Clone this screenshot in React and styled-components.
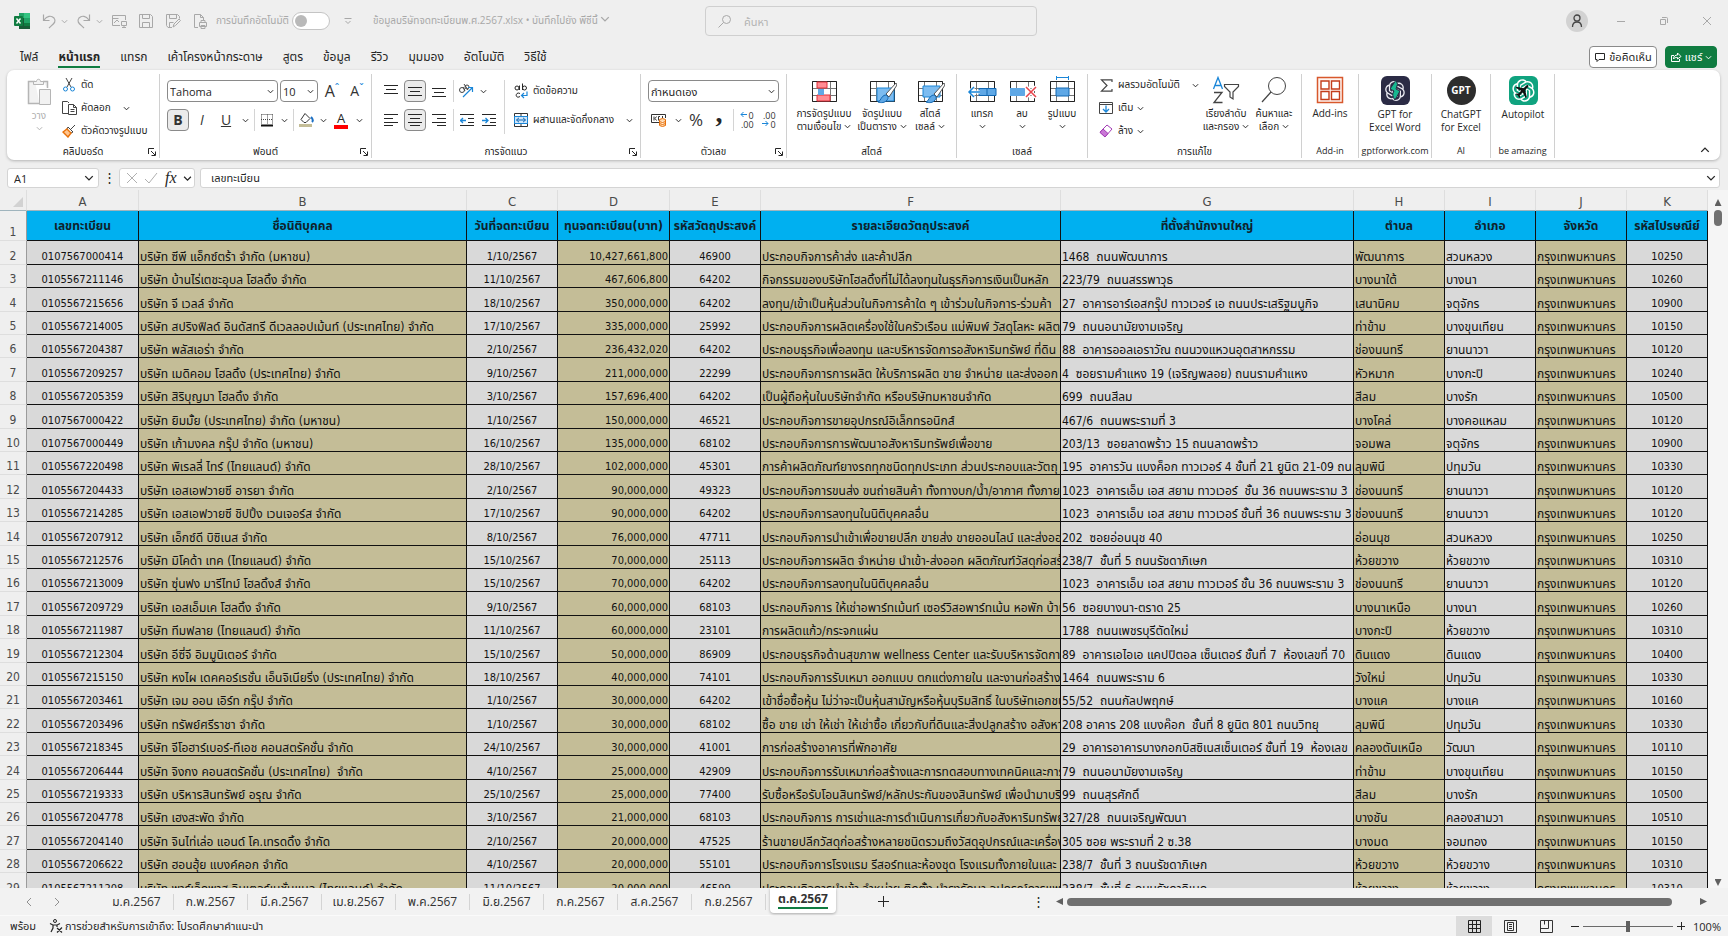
import { useCallback, useState } from 'react';
import styled, { createGlobalStyle, css } from 'styled-components';
import { RiOpenaiFill } from 'react-icons/ri';
import { MdFlight } from 'react-icons/md';

const COLUMNS = [
  { id: 'A', width: 112, title: 'เลขทะเบียน', align: 'center' },
  { id: 'B', width: 328, title: 'ชื่อนิติบุคคล', align: 'left', tan: true },
  { id: 'C', width: 91, title: 'วันที่จดทะเบียน', align: 'center' },
  { id: 'D', width: 112, title: 'ทุนจดทะเบียน(บาท)', align: 'right', tan: true },
  { id: 'E', width: 91, title: 'รหัสวัตถุประสงค์', align: 'center' },
  { id: 'F', width: 300, title: 'รายละเอียดวัตถุประสงค์', align: 'left', tan: true },
  { id: 'G', width: 293, title: 'ที่ตั้งสำนักงานใหญ่', align: 'left' },
  { id: 'H', width: 91, title: 'ตำบล', align: 'left', tan: true },
  { id: 'I', width: 91, title: 'อำเภอ', align: 'left' },
  { id: 'J', width: 91, title: 'จังหวัด', align: 'left', tan: true },
  { id: 'K', width: 81, title: 'รหัสไปรษณีย์', align: 'center' },
];

const BKK = 'กรุงเทพมหานคร';

const ROWS = [
  ['0107567000414', 'บริษัท ซีพี แอ็กซ์ตร้า จำกัด (มหาชน)', '1/10/2567', '10,427,661,800', '46900', 'ประกอบกิจการค้าส่ง และค้าปลีก', '1468  ถนนพัฒนาการ', 'พัฒนาการ', 'สวนหลวง', BKK, '10250'],
  ['0105567211146', 'บริษัท บ้านไร่เตชะอุบล โฮลดิ้ง จำกัด', '11/10/2567', '467,606,800', '64202', 'กิจกรรมของบริษัทโฮลดิ้งที่ไม่ได้ลงทุนในธุรกิจการเงินเป็นหลัก', '223/79  ถนนสรรพาวุธ', 'บางนาใต้', 'บางนา', BKK, '10260'],
  ['0105567215656', 'บริษัท จี เวลล์ จำกัด', '18/10/2567', '350,000,000', '64202', 'ลงทุน/เข้าเป็นหุ้นส่วนในกิจการค้าใด ๆ เข้าร่วมในกิจการ-ร่วมค้า', '27  อาคารอาร์เอสกรุ๊ป ทาวเวอร์ เอ ถนนประเสริฐมนูกิจ', 'เสนานิคม', 'จตุจักร', BKK, '10900'],
  ['0105567214005', 'บริษัท สปริงฟิลด์ อินดัสทรี ดีเวลลอปเม้นท์ (ประเทศไทย) จำกัด', '17/10/2567', '335,000,000', '25992', 'ประกอบกิจการผลิตเครื่องใช้ในครัวเรือน แม่พิมพ์ วัสดุโลหะ ผลิต', '79  ถนนอนามัยงามเจริญ', 'ท่าข้าม', 'บางขุนเทียน', BKK, '10150'],
  ['0105567204387', 'บริษัท พลัสเอร่า จำกัด', '2/10/2567', '236,432,020', '64202', 'ประกอบธุรกิจเพื่อลงทุน และบริหารจัดการอสังหาริมทรัพย์ ที่ดิน', '88  อาคารออลเอราวัณ ถนนวงแหวนอุตสาหกรรม', 'ช่องนนทรี', 'ยานนาวา', BKK, '10120'],
  ['0105567209257', 'บริษัท เมดิคอม โฮลดิ้ง (ประเทศไทย) จำกัด', '9/10/2567', '211,000,000', '22299', 'ประกอบกิจการการผลิต ให้บริการผลิต ขาย จำหน่าย และส่งออก', '4  ซอยรามคำแหง 19 (เจริญพลอย) ถนนรามคำแหง', 'หัวหมาก', 'บางกะปิ', BKK, '10240'],
  ['0105567205359', 'บริษัท สิริบุญมา โฮลดิ้ง จำกัด', '3/10/2567', '157,696,400', '64202', 'เป็นผู้ถือหุ้นในบริษัทจำกัด หรือบริษัทมหาชนจำกัด', '699  ถนนสีลม', 'สีลม', 'บางรัก', BKK, '10500'],
  ['0107567000422', 'บริษัท ยิมมั้ย (ประเทศไทย) จำกัด (มหาชน)', '1/10/2567', '150,000,000', '46521', 'ประกอบกิจการขายอุปกรณ์อิเล็กทรอนิกส์', '467/6  ถนนพระรามที่ 3', 'บางโคล่', 'บางคอแหลม', BKK, '10120'],
  ['0107567000449', 'บริษัท เก้ามงคล กรุ๊ป จำกัด (มหาชน)', '16/10/2567', '135,000,000', '68102', 'ประกอบกิจการการพัฒนาอสังหาริมทรัพย์เพื่อขาย', '203/13  ซอยลาดพร้าว 15 ถนนลาดพร้าว', 'จอมพล', 'จตุจักร', BKK, '10900'],
  ['0105567220498', 'บริษัท พิเรลลี่ ไทร์ (ไทยแลนด์) จำกัด', '28/10/2567', '102,000,000', '45301', 'การค้าผลิตภัณฑ์ยางรถทุกชนิดทุกประเภท ส่วนประกอบและวัตถุ', '195  อาคารวัน แบงค็อก ทาวเวอร์ 4 ชั้นที่ 21 ยูนิต 21-09 ถนน', 'ลุมพินี', 'ปทุมวัน', BKK, '10330'],
  ['0105567204433', 'บริษัท เอสเอฟวายซี อารยา จำกัด', '2/10/2567', '90,000,000', '49323', 'ประกอบกิจการขนส่ง ขนถ่ายสินค้า ทั้งทางบก/น้ำ/อากาศ ทั้งภาย', '1023  อาคารเอ็ม เอส สยาม ทาวเวอร์  ชั้น 36 ถนนพระราม 3', 'ช่องนนทรี', 'ยานนาวา', BKK, '10120'],
  ['0105567214285', 'บริษัท เอสเอฟวายซี ชิปปิ้ง เวนเจอร์ส จำกัด', '17/10/2567', '90,000,000', '64202', 'ประกอบกิจการลงทุนในนิติบุคคลอื่น', '1023  อาคารเอ็ม เอส สยาม ทาวเวอร์ ชั้นที่ 36 ถนนพระราม 3', 'ช่องนนทรี', 'ยานนาวา', BKK, '10120'],
  ['0105567207912', 'บริษัท เอ็กซ์ดี บิซิเนส จำกัด', '8/10/2567', '76,000,000', '47711', 'ประกอบกิจการนำเข้าเพื่อขายปลีก ขายส่ง ขายออนไลน์ และส่งออก', '202  ซอยอ่อนนุช 40', 'อ่อนนุช', 'สวนหลวง', BKK, '10250'],
  ['0105567212576', 'บริษัท มิโคด้า เทค (ไทยแลนด์) จำกัด', '15/10/2567', '70,000,000', '25113', 'ประกอบกิจการผลิต จำหน่าย นำเข้า-ส่งออก ผลิตภัณฑ์วัสดุก่อสร้าง', '238/7  ชั้นที่ 5 ถนนรัชดาภิเษก', 'ห้วยขวาง', 'ห้วยขวาง', BKK, '10310'],
  ['0105567213009', 'บริษัท ซุ่นฟง มารีไทม์ โฮลดิ้งส์ จำกัด', '15/10/2567', '70,000,000', '64202', 'ประกอบกิจการลงทุนในนิติบุคคลอื่น', '1023  อาคารเอ็ม เอส สยาม ทาวเวอร์ ชั้น 36 ถนนพระราม 3', 'ช่องนนทรี', 'ยานนาวา', BKK, '10120'],
  ['0105567209729', 'บริษัท เอสเอ็มเค โฮลดิ้ง จำกัด', '9/10/2567', '60,000,000', '68103', 'ประกอบกิจการ ให้เช่าอพาร์ทเม้นท์ เซอร์วิสอพาร์ทเม้น หอพัก บ้าน', '56  ซอยบางนา-ตราด 25', 'บางนาเหนือ', 'บางนา', BKK, '10260'],
  ['0105567211987', 'บริษัท ทีมฟลาย (ไทยแลนด์) จำกัด', '11/10/2567', '60,000,000', '23101', 'การผลิตแก้ว/กระจกแผ่น', '1788  ถนนเพชรบุรีตัดใหม่', 'บางกะปิ', 'ห้วยขวาง', BKK, '10310'],
  ['0105567212304', 'บริษัท อีซี่จี อิมมูนิเตอร์ จำกัด', '15/10/2567', '50,000,000', '86909', 'ประกอบธุรกิจด้านสุขภาพ wellness Center และรับบริหารจัดการ', '89  อาคารเอไอเอ แคปปิตอล เซ็นเตอร์ ชั้นที่ 7  ห้องเลขที่ 70', 'ดินแดง', 'ดินแดง', BKK, '10400'],
  ['0105567215150', 'บริษัท หงไผ เดคคอร์เรชั่น เอ็นจิเนียริ่ง (ประเทศไทย) จำกัด', '18/10/2567', '40,000,000', '74101', 'ประกอบกิจการรับเหมา ออกแบบ ตกแต่งภายใน และงานก่อสร้าง', '1464  ถนนพระราม 6', 'วังใหม่', 'ปทุมวัน', BKK, '10330'],
  ['0105567203461', 'บริษัท เจม ออน เอิร์ท กรุ๊ป จำกัด', '1/10/2567', '30,000,000', '64202', 'เข้าชื่อซื้อหุ้น ไม่ว่าจะเป็นหุ้นสามัญหรือหุ้นบุริมสิทธิ์ ในบริษัทเอกชน', '55/52  ถนนกัลปพฤกษ์', 'บางแค', 'บางแค', BKK, '10160'],
  ['0105567203496', 'บริษัท ทรัพย์ศรีราชา จำกัด', '1/10/2567', '30,000,000', '68102', 'ซื้อ ขาย เช่า ให้เช่า ให้เช่าซื้อ เกี่ยวกับที่ดินและสิ่งปลูกสร้าง อสังหา', '208 อาคาร 208 แบงค๊อก  ชั้นที่ 8 ยูนิต 801 ถนนวิทยุ', 'ลุมพินี', 'ปทุมวัน', BKK, '10330'],
  ['0105567218345', 'บริษัท จีโอฮาร์เบอร์-ทีเอช คอนสตรัคชั่น จำกัด', '24/10/2567', '30,000,000', '41001', 'การก่อสร้างอาคารที่พักอาศัย', '29  อาคารอาคารบางกอกบิสซิเนสเซ็นเตอร์ ชั้นที่ 19  ห้องเลข', 'คลองตันเหนือ', 'วัฒนา', BKK, '10110'],
  ['0105567206444', 'บริษัท จิงกง คอนสตรัคชั่น (ประเทศไทย)  จำกัด', '4/10/2567', '25,000,000', '42909', 'ประกอบกิจการรับเหมาก่อสร้างและการทดสอบทางเทคนิคและการ', '79  ถนนอนามัยงามเจริญ', 'ท่าข้าม', 'บางขุนเทียน', BKK, '10150'],
  ['0105567219333', 'บริษัท บริหารสินทรัพย์ อรุณ จำกัด', '25/10/2567', '25,000,000', '77400', 'รับซื้อหรือรับโอนสินทรัพย์/หลักประกันของสินทรัพย์ เพื่อนำมาบริหาร', '99  ถนนสุรศักดิ์', 'สีลม', 'บางรัก', BKK, '10500'],
  ['0105567204778', 'บริษัท เฮงสะพัด จำกัด', '3/10/2567', '21,000,000', '68103', 'ประกอบกิจการ การเช่าและการดำเนินการเกี่ยวกับอสังหาริมทรัพย์', '327/28  ถนนเจริญพัฒนา', 'บางชัน', 'คลองสามวา', BKK, '10510'],
  ['0105567204140', 'บริษัท จินไท่เล่อ แอนด์ โค.เทรดดิ้ง จำกัด', '2/10/2567', '20,000,000', '47525', 'ร้านขายปลีกวัสดุก่อสร้างหลายชนิดรวมถึงวัสดุอุปกรณ์และเครื่องมือ', '305 ซอย พระรามที่ 2 ซ.38', 'บางมด', 'จอมทอง', BKK, '10150'],
  ['0105567206622', 'บริษัท ฮอนฮุ้ย แบงค์คอก จำกัด', '4/10/2567', '20,000,000', '55101', 'ประกอบกิจการโรงแรม รีสอร์ทและห้องชุด โรงแรมทั้งภายในและ', '238/7  ชั้นที่ 3 ถนนรัชดาภิเษก', 'ห้วยขวาง', 'ห้วยขวาง', BKK, '10310'],
  ['0105567211208', 'บริษัท พาร์เอ็กพาส อินเตอร์เนชั่นแนล (ไทยแลนด์) จำกัด', '11/10/2567', '20,000,000', '46599', 'ประกอบกิจการนำเข้า จำหน่าย ติดตั้ง บำรุงรักษา อุปกรณ์การแพทย์', '238/7  ชั้นที่ 6 ถนนรัชดาภิเษก', 'ห้วยขวาง', 'ห้วยขวาง', BKK, '10310'],
];

const MENU = ['ไฟล์', 'หน้าแรก', 'แทรก', 'เค้าโครงหน้ากระดาษ', 'สูตร', 'ข้อมูล', 'รีวิว', 'มุมมอง', 'อัตโนมัติ', 'วิธีใช้'];

const SHEETS = ['ม.ค.2567', 'ก.พ.2567', 'มี.ค.2567', 'เม.ย.2567', 'พ.ค.2567', 'มิ.ย.2567', 'ก.ค.2567', 'ส.ค.2567', 'ก.ย.2567', 'ต.ค.2567'];

const Svg = ({ w = 16, h = w, box = `0 0 ${w} ${h}`, className, children }) => (
  <svg className={className} width={w} height={h} viewBox={box} fill="none" stroke="currentColor" strokeWidth="1" aria-hidden="true">
    {children}
  </svg>
);

const Chevron = ({ size = 7 }) => (
  <Svg w={size} box="0 0 8 8">
    <path d="M1 2.5l3 3 3-3" strokeWidth="1.1" />
  </Svg>
);

const LinesIcon = ({ lines }) => (
  <Svg w={14}>
    {lines.map(([x, y, len]) => (
      <path key={y} d={`M${x} ${y}.5h${len}`} />
    ))}
  </Svg>
);

const TableIcon = ({ children }) => (
  <Svg w={30} h={28}>
    <path d="M3.5 5.5h24v20h-24zM3.5 12.5h24M3.5 19.5h24M9.5 5.5v20M21.5 5.5v20" stroke="#777" />
    <path d="M3.5 5.5h24v20h-24z" stroke="#222" />
    {children}
  </Svg>
);

const Brush = () => (
  <>
    <path d="M29 7L19 18l3 3L30 9z" fill="#fff" stroke="#555" />
    <path d="M11 26c3-1 3-6 7-7 3 0 4 3 2 5-2 3-6 3-9 2z" fill="#5fa8e6" stroke="#1268b3" />
  </>
);

const icons = {
  excel: (
    <Svg w={16}>
      <path d="M5 0h11v16H5z" fill="#21a366" stroke="none" />
      <path d="M10 0h6v5h-6z" fill="#33c481" stroke="none" />
      <path d="M5 5h5v6H5zM5 11h11v5H5z" fill="#185c37" stroke="none" />
      <path d="M10 10h6v3h-6z" fill="#107c41" stroke="none" />
      <rect y="3" width="9" height="10" rx="1" fill="#107c41" stroke="none" />
      <path d="M2.5 5.5l4 5M6.5 5.5l-4 5" stroke="#fff" strokeWidth="1.4" />
    </Svg>
  ),
  undo: <Svg><path d="M2.5 1.5v6h6M3 7c3-4 7-5 10-2 3 4-1 6-5 10" strokeWidth="1.2" /></Svg>,
  redo: <Svg><path d="M13.5 1.5v6h-6M13 7C10 3 6 2 3 5c-3 4 1 6 5 10" strokeWidth="1.2" /></Svg>,
  present: <Svg><path d="M9 12.5H1.5v-10h13V7M1.5 5.5h6M3 10l3-3 2 2M10.5 8.5h5v4h-5zM13 12.5v2M11 14.5h4" /></Svg>,
  save: <Svg><path d="M1.5 1.5h11l2 2v11h-13zM4.5 1.5v4h7v-4M4.5 14.5v-5h7v5" /></Svg>,
  saveEdit: <Svg><path d="M7 14.5H3l-1.5-2v-11h11l2 2v2M4.5 1.5v4h7v-4M4.5 14V9.5h4M8 14l1-3 5-5 1.5 1.5-5 5z" /></Svg>,
  print: <Svg><path d="M6 14.5H2.5v-13h6l3 3V7M8.5 1.5v3h3M7.5 9.5h7v4h-7zM9 9V7.5h4V9M9 12.5h4v3H9z" /></Svg>,
  search: <Svg w={14}><circle cx="8.5" cy="5.5" r="4" /><path d="M5.5 8.5l-5 5" /></Svg>,
  more: <Svg w={10}><path d="M1.5 2.5h7M2.5 5L5 7.5 7.5 5" /></Svg>,
  person: <Svg><circle cx="8" cy="5" r="3" strokeWidth="1.3" /><path d="M3.5 14c0-3 1.5-5 4.5-5s4.5 2 4.5 5" strokeWidth="1.3" /></Svg>,
  minimize: <Svg w={10}><path d="M1 5.5h8" /></Svg>,
  restore: <Svg w={10}><path d="M1.5 3.5h5v5h-5zM3 1.5h4.5q1 0 1 1V7" /></Svg>,
  close: <Svg w={10}><path d="M1 1l8 8M9 1L1 9" /></Svg>,
  comment: <Svg w={12}><path d="M1.5 2.5h9v6H5l-2 2v-2H1.5z" /></Svg>,
  share: <Svg w={12}><path d="M4 4.5H1.5v6h8V8M3.5 8c0-3 2-4 4-4V2L11 5.5 7.5 8V6.5c-2 0-3 0-4 1.5z" /></Svg>,
  paste: (
    <Svg w={26} h={28}>
      <path d="M9 3.5H2.5v22h11M17 3.5h4.5V10" stroke="#b5b5b5" fill="#f2f2f2" strokeWidth="1.5" />
      <path d="M7.5 6.5v-3h3c0-3 4-3 4 0h3v3z" stroke="#b5b5b5" fill="#f2f2f2" />
      <path d="M13.5 11.5h11v15h-11z" stroke="#b5b5b5" fill="#f2f2f2" />
    </Svg>
  ),
  cut: (
    <Svg w={14}>
      <path d="M4 0l5 9M10 0L5 9" stroke="#444" />
      <circle cx="3.5" cy="11" r="2" stroke="#1a86d8" /><circle cx="10.5" cy="11" r="2" stroke="#1a86d8" />
    </Svg>
  ),
  copy: <Svg w={15} h={14}><path d="M6 12.5H.5V.5h5L7 2M6.5 3.5h5l3 3v7h-8zM11.5 3.5v3h3M8.5 8.5h4M8.5 10.5h4" stroke="#444" /></Svg>,
  painter: <Svg w={14}><path d="M13 1L9 5M6 3l5 5-2 1-4-4z" stroke="#444" /><path d="M5 5l4 4-3 4-5-5z" fill="#ffc58f" stroke="#e8710a" strokeWidth="1.4" /></Svg>,
  border: (
    <Svg w={14}>
      <path d="M1.5 1.5h12M1.5 1.5v10M7.5 1.5v10M12.5 1.5v10M1 6.5h12" stroke="#444" strokeDasharray="1 1" />
      <path d="M1 12.5h12" stroke="#111" strokeWidth="2" />
    </Svg>
  ),
  fill: (
    <Svg w={16}>
      <path d="M7 1.5l5 5-4 4H6l-3-3z" stroke="#333" /><path d="M13 5c2 2 2 4 1 5" stroke="#1a6fc4" strokeWidth="2" />
      <path d="M1 12h13v3H1z" fill="#c4bd97" stroke="none" />
    </Svg>
  ),
  bars: {
    top: <LinesIcon lines={[[0, 1, 14], [2, 5, 10], [0, 9, 14]]} />,
    middle: <LinesIcon lines={[[0, 3, 14], [2, 7, 10], [0, 11, 14]]} />,
    bottom: <LinesIcon lines={[[0, 4, 14], [2, 8, 10], [0, 12, 14]]} />,
    left: <LinesIcon lines={[[0, 1, 14], [0, 5, 9], [0, 9, 14], [0, 12, 9]]} />,
    center: <LinesIcon lines={[[0, 1, 14], [2, 5, 10], [0, 9, 14], [2, 12, 10]]} />,
    right: <LinesIcon lines={[[0, 1, 14], [5, 5, 9], [0, 9, 14], [5, 12, 9]]} />,
  },
  orientation: (
    <Svg w={16}>
      <circle cx="4" cy="7" r="2.5" stroke="#444" /><path d="M5 4l2 4M6 1l4 6" stroke="#444" /><circle cx="9" cy="4" r="2" stroke="#444" />
      <path d="M5 14l9-9M10 4.5h4.5V9" stroke="#1a86d8" strokeWidth="1.2" />
    </Svg>
  ),
  outdent: <Svg w={14}><path d="M0 1.5h14M8 5.5h6M8 9.5h6M0 12.5h14" /><path d="M0 7.5h6M3 5L.5 7.5 3 10" stroke="#1a86d8" strokeWidth="1.3" /></Svg>,
  indent: <Svg w={14}><path d="M0 1.5h14M8 5.5h6M8 9.5h6M0 12.5h14" /><path d="M0 7.5h6M3.5 5L6 7.5 3.5 10" stroke="#1a86d8" strokeWidth="1.3" /></Svg>,
  wrap: (
    <Svg w={14} h={16}>
      <circle cx="3" cy="5" r="2" /><path d="M5.5 2.5V7M8.5.5V7M6 13.5c-3 2-5-1-3-3q1-1 3 0" /><circle cx="10.5" cy="5" r="2" />
      <path d="M13 8.5v4H8M10 10l-2.5 2.5L10 15" stroke="#1a86d8" strokeWidth="1.2" />
    </Svg>
  ),
  merge: (
    <Svg w={14}>
      <path d="M.5.5h13v13H.5zM7 .5v3M7 11v2.5" stroke="#333" />
      <path d="M.5 3.5h13v7H.5z" fill="#cfe6fa" stroke="#1a86d8" /><path d="M2.5 7h9M5 4.8L2.5 7 5 9.2M9 4.8L11.5 7 9 9.2" stroke="#1268b3" />
    </Svg>
  ),
  currency: (
    <Svg w={16} h={14}>
      <path d="M8 9.5H.5v-8h14V5M3 3.5v4M5.5 3.5q-3 2 0 4M9 3.5H7.5v4M11.5 3v2" stroke="#333" />
      <path d="M8.5 6.5q3-2 6 0v6q-3 2-6 0zM8.5 8.5q3 2 6 0M8.5 10.5q3 2 6 0" fill="#ffd9b0" stroke="#e8710a" />
    </Svg>
  ),
  conditional: (
    <TableIcon>
      <path d="M8 6h10v6H8zM8 19h13v6H8z" fill="#ff8d94" stroke="#e0313b" />
      <path d="M9 13h6v6H9z" fill="#5fa8e6" stroke="none" />
    </TableIcon>
  ),
  formatTable: <TableIcon><path d="M10 12h17v13H10z" fill="#7dbcf0" stroke="#1a86d8" /><Brush /></TableIcon>,
  cellStyle: <TableIcon><path d="M8 10h17v11H8z" fill="#7dbcf0" stroke="#1a86d8" /><Brush /></TableIcon>,
  insert: (
    <TableIcon>
      <path d="M12 12.5h17v7H12zM20 12.5v7" fill="#5fa8e6" stroke="#1268b3" />
      <path d="M13 16H2M7 11l-5 5 5 5" stroke="#fff" strokeWidth="3" /><path d="M13 16H2M7 11l-5 5 5 5" stroke="#1a86d8" strokeWidth="1.5" />
    </TableIcon>
  ),
  remove: (
    <TableIcon>
      <path d="M3 12h15v8H3z" fill="#5fa8e6" stroke="none" />
      <path d="M19 11l10 10M29 11L19 21" stroke="#fff" strokeWidth="4" /><path d="M19 11l10 10M29 11L19 21" stroke="#e8434c" strokeWidth="1.5" />
    </TableIcon>
  ),
  format: <TableIcon><path d="M9 12h13v8H9z" fill="#5fa8e6" stroke="#1268b3" /><path d="M9 1.5h13M9.5 0v4M21.5 0v4" stroke="#1a86d8" /></TableIcon>,
  sum: <Svg w={13}><path d="M12 3V.8H1.5L7 6.5l-5.5 5.7H12V10" stroke="#444" strokeWidth="1.2" /></Svg>,
  fillDown: <Svg w={14}><path d="M.5 1.5h13v11H.5zM.5 3.5h13" stroke="#444" /><path d="M7 4.5V11M4 8l3 3 3-3" stroke="#1a86d8" strokeWidth="1.3" /></Svg>,
  clear: <Svg w={14}><path d="M8 1l5 4-7 8-5-5z" stroke="#a33bb5" /><path d="M4 5l5 4.5L6 13l-5-4.5z" fill="#c978d6" stroke="#a33bb5" /></Svg>,
  sort: (
    <Svg w={28} h={28}>
      <path d="M1.5 13L6 1.5 10.5 13M3 9.5h6" stroke="#1a86d8" strokeWidth="1.3" />
      <path d="M2 16.5h8L2 26.5h8.5" stroke="#444" strokeWidth="1.3" />
      <path d="M12.5 8.5h14v2L21 16v7l-3-2v-5l-5.5-5.5z" stroke="#444" strokeWidth="1.2" />
    </Svg>
  ),
  find: <Svg w={28}><circle cx="17" cy="10" r="8.5" stroke="#444" /><path d="M11 16L2 26" stroke="#444" strokeWidth="1.2" /></Svg>,
  addins: (
    <Svg w={28} h={28}>
      <path d="M1.5 1.5h25v25h-25z" stroke="#d8582c" fill="#fff5f0" strokeWidth="1.5" />
      <path d="M5 5h8v8H5zM15.5 5h8v8h-8zM5 15.5h8v8H5zM15.5 15.5h8v8h-8z" stroke="#c43e1c" fill="#fff" strokeWidth="1.4" />
    </Svg>
  ),
  arrowLeft: <Svg w={7}><path d="M7 3.5H1M3.5 1L1 3.5 3.5 6" stroke="#1a86d8" /></Svg>,
  arrowRight: <Svg w={7}><path d="M0 3.5h6M3.5 1L6 3.5 3.5 6" stroke="#1a86d8" /></Svg>,
  launcher: <Svg w={8}><path d="M.5 6V.5H6M3 3l4 4M7.5 3.5v4h-4" /></Svg>,
  up: <Svg w={10} box="0 0 8 8"><path d="M1 5.5l3-3 3 3" strokeWidth="1.1" /></Svg>,
  access: <Svg w={14}><circle cx="6" cy="2" r="1.5" /><path d="M1 4.5l3 1.5v3l-2 4M11 4.5L8 6v2M4 6h4M8 9l5 4.5M13 8.5l-5 5" strokeWidth="1.2" /></Svg>,
  grid: <Svg w={13}><path d="M.5.5h12v12H.5zM4.5.5v12M8.5.5v12M.5 4.5h12M.5 8.5h12" stroke="#222" /></Svg>,
  pageLayout: <Svg w={13}><path d="M.5.5h12v12H.5zM3.5 2.5h6v8h-6zM5 4.5h3M5 6.5h3M5 8.5h3" stroke="#333" /></Svg>,
  pageBreak: <Svg w={13}><path d="M.5.5h12v12H.5zM.5 8.5h8v-8M4.5.5v4" stroke="#333" /></Svg>,
};

function Tool({ label, active, width, children }) {
  return (
    <ToolButton type="button" aria-label={label} title={label} $active={active} $width={width}>
      {children}
    </ToolButton>
  );
}

const More = ({ label = 'ตัวเลือกเพิ่มเติม' }) => (
  <Tool label={label} width={12}>
    <Chevron />
  </Tool>
);

function Combo({ label, value, width }) {
  return (
    <ComboBox $width={width}>
      <select aria-label={label} defaultValue={value}>
        <option>{value}</option>
      </select>
      <Chevron />
    </ComboBox>
  );
}

function Small({ icon, label, menu, spread }) {
  return (
    <SmallButton type="button" $spread={spread}>
      <IconSlot>{icon}</IconSlot>
      <span>{label}</span>
      {menu && <Chevron />}
    </SmallButton>
  );
}

function Large({ icon, lines, menu, width, muted }) {
  return (
    <LargeButton type="button" $width={width} $muted={muted}>
      {icon}
      {lines.map((line, i) => (
        <span key={line}>
          {line}
          {menu && lines.length > 1 && i === lines.length - 1 && <Chevron />}
        </span>
      ))}
      {menu && lines.length === 1 && <Chevron />}
    </LargeButton>
  );
}

function Group({ title, width, inset, launcher, compact, children }) {
  return (
    <GroupBox $width={width} aria-label={title}>
      <GroupBody $inset={inset}>{children}</GroupBody>
      <GroupFooter $compact={compact}>
        <span>{title}</span>
        {launcher && <Launcher type="button" aria-label={`การตั้งค่า${title}`}>{icons.launcher}</Launcher>}
      </GroupFooter>
    </GroupBox>
  );
}

function Ribbon() {
  return (
    <RibbonBox>
      <Group title="คลิปบอร์ด" width={153} inset={10} launcher>
        <Large icon={icons.paste} lines={['วาง']} menu width={44} muted />
        <Stack>
          <Small icon={icons.cut} label="ตัด" />
          <Small icon={icons.copy} label="คัดลอก" menu spread />
          <Small icon={icons.painter} label="ตัวคัดวางรูปแบบ" />
        </Stack>
      </Group>
      <Group title="ฟอนต์" width={212} inset={7} launcher>
        <Rows>
          <ToolRow>
            <Combo label="ฟอนต์" value="Tahoma" width={111} />
            <Combo label="ขนาดฟอนต์" value="10" width={38} />
            <Tool label="เพิ่มขนาดฟอนต์" width={24}><Glyph $size={16}>A</Glyph><Caret>ˆ</Caret></Tool>
            <Tool label="ลดขนาดฟอนต์"><Glyph $size={14}>A</Glyph><Caret>ˇ</Caret></Tool>
          </ToolRow>
          <ToolRow>
            <Tool label="ตัวหนา" active><Glyph $size={14} $bold>B</Glyph></Tool>
            <Tool label="ตัวเอียง"><Glyph $size={14} $italic>I</Glyph></Tool>
            <Tool label="ขีดเส้นใต้"><Glyph $size={14} $underline>U</Glyph></Tool>
            <More />
            <Rule />
            <Tool label="เส้นขอบ" width={18}>{icons.border}</Tool>
            <More />
            <Rule />
            <Tool label="สีเติม" width={18}>{icons.fill}</Tool>
            <More />
            <Tool label="สีฟอนต์" width={20}><ColorA>A</ColorA></Tool>
            <More />
          </ToolRow>
        </Rows>
      </Group>
      <Group title="การจัดแนว" width={269} inset={8} launcher>
        <Rows>
          <ToolRow>
            <Tool label="จัดชิดด้านบน">{icons.bars.top}</Tool>
            <Tool label="จัดกึ่งกลางแนวตั้ง" active>{icons.bars.middle}</Tool>
            <Tool label="จัดชิดด้านล่าง">{icons.bars.bottom}</Tool>
            <Rule />
            <Tool label="การวางแนว" width={18}>{icons.orientation}</Tool>
            <More />
          </ToolRow>
          <ToolRow>
            <Tool label="จัดชิดซ้าย">{icons.bars.left}</Tool>
            <Tool label="จัดกึ่งกลาง" active>{icons.bars.center}</Tool>
            <Tool label="จัดชิดขวา">{icons.bars.right}</Tool>
            <Rule />
            <Tool label="ลดการเยื้อง" width={20}>{icons.outdent}</Tool>
            <Tool label="เพิ่มการเยื้อง" width={20}>{icons.indent}</Tool>
          </ToolRow>
        </Rows>
        <Rule $tall />
        <Rows>
          <Small icon={icons.wrap} label="ตัดข้อความ" />
          <Small icon={icons.merge} label="ผสานและจัดกึ่งกลาง" menu spread />
        </Rows>
      </Group>
      <Group title="ตัวเลข" width={146} inset={7} launcher>
        <Rows>
          <ToolRow>
            <Combo label="รูปแบบตัวเลข" value="กำหนดเอง" width={131} />
          </ToolRow>
          <ToolRow>
            <Tool label="รูปแบบตัวเลขทางบัญชี">{icons.currency}</Tool>
            <More />
            <Tool label="ลักษณะเปอร์เซ็นต์" width={20}><Glyph $size={17}>%</Glyph></Tool>
            <Tool label="ลักษณะจุลภาค"><Comma>,</Comma></Tool>
            <Rule />
            <Tool label="เพิ่มตำแหน่งทศนิยม" width={20}>
              <Decimal><span>{icons.arrowLeft}0</span><span>.00</span></Decimal>
            </Tool>
            <Tool label="ลดตำแหน่งทศนิยม" width={20}>
              <Decimal><span>.00</span><span>{icons.arrowRight}0</span></Decimal>
            </Tool>
          </ToolRow>
        </Rows>
      </Group>
      <Group title="สไตล์" width={170} inset={6}>
        <Large icon={icons.conditional} lines={['การจัดรูปแบบ', 'ตามเงื่อนไข']} menu width={62} />
        <Large icon={icons.formatTable} lines={['จัดรูปแบบ', 'เป็นตาราง']} menu width={54} />
        <Large icon={icons.cellStyle} lines={['สไตล์', 'เซลล์']} menu width={42} />
      </Group>
      <Group title="เซลล์" width={131} inset={5}>
        <Large icon={icons.insert} lines={['แทรก']} menu width={40} />
        <Large icon={icons.remove} lines={['ลบ']} menu width={40} />
        <Large icon={icons.format} lines={['รูปแบบ']} menu width={40} />
      </Group>
      <Group title="การแก้ไข" width={214} inset={10}>
        <Stack $width={103}>
          <Small icon={icons.sum} label="ผลรวมอัตโนมัติ" menu spread />
          <Small icon={icons.fillDown} label="เติม" menu />
          <Small icon={icons.clear} label="ล้าง" menu />
        </Stack>
        <Large icon={icons.sort} lines={['เรียงลำดับ', 'และกรอง']} menu width={50} />
        <Large icon={icons.find} lines={['ค้นหาและ', 'เลือก']} menu width={46} />
      </Group>
      <Group title="Add-in" width={57} inset={3} compact>
        <Large icon={icons.addins} lines={['Add-ins']} width={50} />
      </Group>
      <Group title="gptforwork.com" width={73} inset={2} compact>
        <Large
          icon={(
            <AppBadge $bg="#2b2b45">
              <RiOpenaiFill size={24} color="#e8e8f0" />
              <Leaf w={10} h={20}><path d="M6 0q3 4 0 9l4 2-5 9q-4-5-1-9L0 9z" fill="#17b890" stroke="#2b2b45" /></Leaf>
            </AppBadge>
          )}
          lines={['GPT for', 'Excel Word']}
          width={68}
        />
      </Group>
      <Group title="AI" width={59} inset={2} compact>
        <Large icon={<AppBadge $bg="#2d2d2d" $round>GPT</AppBadge>} lines={['ChatGPT', 'for Excel']} width={54} />
      </Group>
      <Group title="be amazing" width={64} inset={3} compact>
        <Large icon={<AppBadge $bg="#10a37f"><RiOpenaiFill size={27} color="#fff" /><Plane size={18} /></AppBadge>} lines={['Autopilot']} width={58} />
      </Group>
      <Collapse type="button" aria-label="ยุบ Ribbon">{icons.up}</Collapse>
    </RibbonBox>
  );
}

function Sheet() {
  return (
    <SheetArea>
      <TableScroll>
        <Grid>
          <colgroup>
            <col width={27} />
            {COLUMNS.map((c) => (
              <col key={c.id} width={c.width} />
            ))}
          </colgroup>
          <thead>
            <tr>
              <ColumnHead aria-label="เลือกทั้งหมด"><Corner /></ColumnHead>
              {COLUMNS.map((c) => (
                <ColumnHead key={c.id} scope="col">{c.id}</ColumnHead>
              ))}
            </tr>
          </thead>
          <tbody>
            <tr>
              <RowHead scope="row">1</RowHead>
              {COLUMNS.map((c) => (
                <TitleCell key={c.id}>{c.title}</TitleCell>
              ))}
            </tr>
            {ROWS.map((row, i) => (
              <DataRow key={row[0]}>
                <RowHead scope="row">{i + 2}</RowHead>
                {row.map((value, j) => (
                  <Cell key={COLUMNS[j].id} $align={COLUMNS[j].align} $tan={COLUMNS[j].tan}>
                    {value}
                  </Cell>
                ))}
              </DataRow>
            ))}
          </tbody>
        </Grid>
      </TableScroll>
      <VerticalBar>
        <Arrow $dir="up" />
        <VerticalThumb />
        <Arrow $dir="down" />
      </VerticalBar>
    </SheetArea>
  );
}

export default function App() {
  const [tab, setTab] = useState('หน้าแรก');
  const [sheet, setSheet] = useState('ต.ค.2567');
  const [autoSave, setAutoSave] = useState(false);

  const handleAutoSave = useCallback((e) => {
    setAutoSave(e.target.checked);
  }, []);

  return (
    <Shell>
      <GlobalStyle />
      <TitleBar>
        <QuickAccess>
          {icons.excel}
          <Quick type="button" aria-label="เลิกทำ">{icons.undo}<Chevron /></Quick>
          <Quick type="button" aria-label="ทำซ้ำ">{icons.redo}<Chevron /></Quick>
          <Quick type="button" aria-label="นำเสนอ">{icons.present}</Quick>
          <Quick type="button" aria-label="บันทึก">{icons.save}</Quick>
          <Quick type="button" aria-label="บันทึกเป็น">{icons.saveEdit}</Quick>
          <Quick type="button" aria-label="พิมพ์">{icons.print}</Quick>
        </QuickAccess>
        <AutoSave>
          การบันทึกอัตโนมัติ
          <Switch type="checkbox" checked={autoSave} onChange={handleAutoSave} />
        </AutoSave>
        <Quick type="button" aria-label="กำหนดแถบเครื่องมือเอง">{icons.more}</Quick>
        <FileName type="button">
          ข้อมูลบริษัทจดทะเบียนพ.ศ.2567.xlsx • บันทึกไปยัง พีซีนี้ <Chevron size={10} />
        </FileName>
        <SearchBox>
          {icons.search}
          <input type="search" placeholder="ค้นหา" aria-label="ค้นหา" />
        </SearchBox>
        <WindowControls>
          <Avatar type="button" aria-label="บัญชี">{icons.person}</Avatar>
          <button type="button" aria-label="ย่อเล็กสุด">{icons.minimize}</button>
          <button type="button" aria-label="คืนค่า">{icons.restore}</button>
          <button type="button" aria-label="ปิด">{icons.close}</button>
        </WindowControls>
      </TitleBar>
      <MenuBar>
        {MENU.map((name) => (
          <MenuTab key={name} type="button" $active={name === tab} onClick={() => setTab(name)}>
            {name}
          </MenuTab>
        ))}
        <MenuActions>
          <ActionButton type="button">{icons.comment}ข้อคิดเห็น</ActionButton>
          <ActionButton type="button" $primary>{icons.share}แชร์<Chevron /></ActionButton>
        </MenuActions>
      </MenuBar>
      <Ribbon />
      <FormulaBar>
        <NameBox>
          <input defaultValue="A1" aria-label="กล่องชื่อ" />
          <Chevron size={10} />
        </NameBox>
        <Dots>⋮</Dots>
        <FormulaTools>
          <Svg w={12}><path d="M1 1l10 10M11 1L1 11" stroke="#b0b0b0" /></Svg>
          <Svg w={14}><path d="M1 8l4 4L13 2" stroke="#b0b0b0" /></Svg>
          <Fx>fx</Fx>
          <Chevron size={9} />
        </FormulaTools>
        <FormulaBox>
          <input defaultValue="เลขทะเบียน" aria-label="แถบสูตร" />
          <Chevron size={10} />
        </FormulaBox>
      </FormulaBar>
      <Sheet />
      <SheetBar>
        <SheetNav>
          <button type="button" aria-label="แผ่นงานก่อนหน้า"><Svg w={8}><path d="M6 0L2 4l4 4" /></Svg></button>
          <button type="button" aria-label="แผ่นงานถัดไป"><Svg w={8}><path d="M2 0l4 4-4 4" /></Svg></button>
        </SheetNav>
        {SHEETS.map((name) => (
          <SheetTab key={name} type="button" $active={name === sheet} onClick={() => setSheet(name)}>
            <span>{name}</span>
          </SheetTab>
        ))}
        <NewSheet type="button" aria-label="แผ่นงานใหม่">
          <Svg w={11}><path d="M5.5 0v11M0 5.5h11" /></Svg>
        </NewSheet>
        <HorizontalBar>
          <Dots>⋮</Dots>
          <Arrow $dir="left" />
          <HorizontalTrack><HorizontalThumb /></HorizontalTrack>
          <Arrow $dir="right" />
        </HorizontalBar>
      </SheetBar>
      <StatusBar>
        <span>พร้อม</span>
        <StatusItem>{icons.access}การช่วยสำหรับการเข้าถึง: โปรดศึกษาคำแนะนำ</StatusItem>
        <ViewControls>
          <ViewButton type="button" aria-label="ปกติ" $active>{icons.grid}</ViewButton>
          <ViewButton type="button" aria-label="เค้าโครงหน้ากระดาษ">{icons.pageLayout}</ViewButton>
          <ViewButton type="button" aria-label="แสดงตัวอย่างตัวแบ่งหน้า">{icons.pageBreak}</ViewButton>
          <ZoomButton type="button" aria-label="ย่อ"><Svg w={8}><path d="M0 4.5h8" /></Svg></ZoomButton>
          <ZoomSlider type="range" min="10" max="190" defaultValue="100" aria-label="ย่อ/ขยาย" />
          <ZoomButton type="button" aria-label="ขยาย"><Svg w={8}><path d="M0 4.5h8M4.5 0v8" /></Svg></ZoomButton>
          <ZoomValue>100%</ZoomValue>
        </ViewControls>
      </StatusBar>
    </Shell>
  );
}

const uiFont = "'Open Sans', 'Noto Sans Thai', 'Noto Sans', sans-serif";
const cellFont = "'DejaVu Sans Condensed', 'DejaVu Sans', 'Noto Sans Thai', sans-serif";

const GlobalStyle = createGlobalStyle`
  * {
    box-sizing: border-box;
  }

  body {
    margin: 0;
    background: #efefef;
    color: #262626;
    font-family: ${uiFont};
    font-size: 11px;
  }

  button, input, select {
    margin: 0;
    padding: 0;
    border: 0;
    background: none;
    color: inherit;
    font: inherit;
  }

  svg {
    flex: none;
  }
`;

const Shell = styled.div`
  display: flex;
  flex-direction: column;
  height: 100vh;
  overflow: hidden;
  white-space: nowrap;
`;

const TitleBar = styled.header`
  display: flex;
  align-items: center;
  height: 42px;
  padding-left: 14px;
  color: #a8a8a8;
  font-size: 10px;
`;

const QuickAccess = styled.div`
  display: flex;
  align-items: center;
  gap: 8px;
`;

const Quick = styled.button`
  display: flex;
  align-items: center;
  gap: 4px;

  ${QuickAccess} &:first-of-type,
  ${QuickAccess} &:nth-of-type(n + 4) {
    margin-left: 3px;
  }
`;

const AutoSave = styled.label`
  display: flex;
  align-items: center;
  gap: 3px;
  margin: 0 13px 0 8px;
`;

const Switch = styled.input`
  appearance: none;
  flex: none;
  display: flex;
  align-items: center;
  justify-content: ${({ checked }) => (checked ? 'flex-end' : 'flex-start')};
  width: 38px;
  height: 18px;
  padding: 0 2px;
  border: 1px solid #c4c4c4;
  border-radius: 9px;
  background: #fff;

  &::before {
    content: '';
    width: 12px;
    height: 12px;
    border-radius: 50%;
    background: #b9b9b9;
  }
`;

const FileName = styled.button`
  width: 246px;
  margin-left: 20px;
  text-align: left;
`;

const SearchBox = styled.label`
  display: flex;
  align-items: center;
  gap: 12px;
  width: 332px;
  height: 30px;
  margin-left: 86px;
  padding: 0 12px;
  border: 1px solid #cfcfcf;
  border-radius: 4px;
  font-size: 11px;

  input {
    flex: 1;
    outline: 0;
  }

  input::placeholder {
    color: #b4b4b4;
  }
`;

const WindowControls = styled.div`
  display: flex;
  align-items: center;
  margin-left: auto;

  button {
    display: grid;
    place-items: center;
    width: 43px;
  }
`;

const Avatar = styled.button`
  && {
    width: 22px;
    height: 22px;
    margin-right: 11px;
    border-radius: 50%;
    background: #d2d2d2;
    color: #444;
  }
`;

const MenuBar = styled.nav`
  display: flex;
  align-items: center;
  height: 28px;
  padding: 0 11px 0 20px;
  gap: 20px;
`;

const MenuTab = styled.button`
  height: 21px;
  margin-top: 3px;
  border-bottom: 2px solid ${({ $active }) => ($active ? '#107c41' : 'transparent')};
  font-size: 12px;
  line-height: 16px;
  font-weight: ${({ $active }) => ($active ? 700 : 400)};
`;

const MenuActions = styled.div`
  display: flex;
  gap: 8px;
  margin-left: auto;
`;

const ActionButton = styled.button`
  display: flex;
  align-items: center;
  justify-content: center;
  gap: 3px;
  height: 22px;
  margin-top: 2px;
  width: ${({ $primary }) => ($primary ? 52 : 68)}px;
  border: 1px solid ${({ $primary }) => ($primary ? '#107c41' : '#8a8a8a')};
  border-radius: 4px;
  background: ${({ $primary }) => ($primary ? '#107c41' : '#fff')};
  color: ${({ $primary }) => ($primary ? '#fff' : '#262626')};
`;

const RibbonBox = styled.section`
  display: flex;
  margin: 0 8px 0 7px;
  border-radius: 7px;
  background: #fff;
  box-shadow: 0 1px 3px rgba(0, 0, 0, 0.25);
  font-size: 10px;
`;

const GroupBox = styled.section`
  display: flex;
  flex-direction: column;
  flex: none;
  width: ${({ $width }) => $width}px;
  margin: 4px 0 2px;
  border-right: 1px solid #d0d0d0;
`;

const GroupBody = styled.div`
  display: flex;
  height: 70px;
  padding-left: ${({ $inset }) => $inset}px;
`;

const GroupFooter = styled.div`
  position: relative;
  height: 14px;
  font-size: ${({ $compact }) => ($compact ? 9 : 10)}px;
  line-height: 14px;
  text-align: center;
`;

const Launcher = styled.button`
  position: absolute;
  right: 3px;
  top: 4px;
  line-height: 0;
`;

const Collapse = styled.button`
  align-self: flex-end;
  margin: 0 10px 2px auto;
`;

const Stack = styled.div`
  display: flex;
  flex-direction: column;
  justify-content: space-between;
  height: 68px;
  width: ${({ $width }) => ($width ? `${$width}px` : 'auto')};
`;

const Rows = styled.div`
  display: flex;
  flex-direction: column;
  gap: 7px;
  padding-top: 6px;
`;

const ToolRow = styled.div`
  display: flex;
  align-items: center;
  gap: 2px;
  height: 22px;
`;

const center = css`
  display: flex;
  align-items: center;
  justify-content: center;
`;

const ToolButton = styled.button`
  ${center}
  flex: none;
  width: ${({ $width = 22 }) => $width}px;
  height: 22px;
  border: 1px solid ${({ $active }) => ($active ? '#8a8a8a' : 'transparent')};
  border-radius: 4px;
  background: ${({ $active }) => ($active ? '#ebebeb' : 'transparent')};

  &:hover {
    background: #f0f0f0;
  }
`;

const ComboBox = styled.label`
  display: flex;
  align-items: center;
  width: ${({ $width }) => $width}px;
  height: 22px;
  padding: 0 3px 0 2px;
  border: 1px solid #8a8a8a;
  border-radius: 4px;
  font-size: 11px;

  select {
    appearance: none;
    flex: 1;
    min-width: 0;
    outline: 0;
  }
`;

const SmallButton = styled.button`
  display: flex;
  align-items: center;
  gap: ${({ $spread }) => ($spread ? 12 : 4)}px;
  height: 22px;

  span + span {
    margin-left: ${({ $spread }) => ($spread ? -8 : 0)}px;
  }
`;

const IconSlot = styled.span`
  ${center}
  width: 16px;
`;

const LargeButton = styled.button`
  display: flex;
  flex-direction: column;
  align-items: center;
  flex: none;
  width: ${({ $width }) => $width}px;
  padding-top: ${({ $muted }) => ($muted ? 4 : 2)}px;
  line-height: 13px;
  color: ${({ $muted }) => ($muted ? '#b0b0b0' : 'inherit')};

  > :first-child {
    margin-bottom: 3px;
  }

  > svg:last-child {
    margin-top: 3px;
  }

  span > svg {
    margin-left: 3px;
  }
`;

const Rule = styled.span`
  width: 1px;
  height: ${({ $tall }) => ($tall ? 54 : 22)}px;
  margin: ${({ $tall }) => ($tall ? '6px 8px 0 5px' : '0 1px')};
  background: #d4d4d4;
`;

const Glyph = styled.span`
  font-size: ${({ $size }) => $size}px;
  line-height: 18px;
  color: #333;
  font-weight: ${({ $bold }) => ($bold ? 700 : 400)};
  font-style: ${({ $italic }) => ($italic ? 'italic' : 'normal')};
  text-decoration: ${({ $underline }) => ($underline ? 'underline' : 'none')};
`;

const Caret = styled.span`
  align-self: flex-start;
  color: #1a86d8;
  font-size: 11px;
  line-height: 14px;
`;

const ColorA = styled.span`
  width: 14px;
  border-bottom: 4px solid #f00;
  font-size: 13px;
  line-height: 13px;
  text-align: center;
`;

const Comma = styled.span`
  height: 22px;
  font: 700 28px/8px 'Liberation Serif', serif;
`;

const Decimal = styled.span`
  display: flex;
  flex-direction: column;
  align-items: flex-end;
  color: #333;
  font-size: 9px;
  line-height: 9px;

  span {
    display: flex;
    gap: 1px;
  }
`;

const AppBadge = styled.span`
  ${center}
  position: relative;
  width: 29px;
  height: 29px;
  border-radius: ${({ $round }) => ($round ? '50%' : '6px')};
  background: ${({ $bg }) => $bg};
  color: #fff;
  font-size: 10px;
  font-weight: 700;

  && > svg {
    margin: 0;
  }
`;

const Leaf = styled(Svg)`
  position: absolute;
  top: 4px;
  left: 9px;
`;

const Plane = styled(MdFlight)`
  position: absolute;
  color: #111;
  rotate: 45deg;
`;

const FormulaBar = styled.div`
  display: flex;
  height: 20px;
  margin: 8px 8px 2px 7px;

  input {
    flex: 1;
    min-width: 0;
    outline: 0;
  }
`;

const NameBox = styled.label`
  display: flex;
  align-items: center;
  width: 92px;
  padding: 0 4px 0 6px;
  border: 1px solid #d4d4d4;
  border-radius: 3px;
  background: #fff;
`;

const Dots = styled.span`
  width: 20px;
  text-align: center;
  font-size: 13px;
  line-height: 19px;
`;

const FormulaTools = styled.div`
  display: flex;
  align-items: center;
  justify-content: space-between;
  width: 76px;
  padding: 0 2px 0 6px;
  border: 1px solid #d4d4d4;
  border-radius: 3px;
  background: #fff;
`;

const Fx = styled.i`
  font: italic 16px/16px 'Liberation Serif', serif;
`;

const FormulaBox = styled(NameBox)`
  flex: 1;
  margin-left: 5px;
  padding: 0 3px 0 10px;
`;

const SheetArea = styled.main`
  display: flex;
  flex: 1;
  min-height: 0;
`;

const TableScroll = styled.div`
  flex: 1;
  min-width: 0;
  overflow: hidden;
`;

const Grid = styled.table`
  width: 100%;
  table-layout: fixed;
  border-collapse: separate;
  border-spacing: 0;
  font-family: ${cellFont};
`;

const ColumnHead = styled.th`
  height: 21px;
  padding: 4px 0 0;
  border-right: 1px solid #dedede;
  border-bottom: 1px solid #9fb4bd;
  color: #4a4a4a;
  font-size: 13px;
  font-weight: 400;
  line-height: 16px;
`;

const Corner = styled.i`
  display: block;
  margin-left: 13px;
  border: 5px solid #d2d2d2;
  border-top-color: transparent;
  border-left-color: transparent;
  width: 10px;
`;

const RowHead = styled.th`
  padding: 0;
  border-right: 1px solid #9b9b9b;
  border-bottom: 1px solid #dedede;
  color: #4a4a4a;
  font-size: 12px;
  font-weight: 400;
  line-height: 15px;
  vertical-align: bottom;
`;

const TitleCell = styled.td`
  height: 30px;
  padding: 0;
  overflow: hidden;
  border-right: 1px solid #111;
  border-bottom: 1px solid #111;
  background: #00b0f0;
  color: #10222b;
  font-size: 12px;
  font-weight: 700;
  text-align: center;
`;

// rows alternate between 23 and 24px to keep the sheet's 23.4px rhythm
const DataRow = styled.tr`
  height: 23px;

  &:nth-child(5n + 2),
  &:nth-child(5n + 4) {
    height: 24px;
  }
`;

const Cell = styled.td`
  padding: 0 1px;
  overflow: hidden;
  border-right: 1px solid #111;
  border-bottom: 1px solid #111;
  background: ${({ $tan }) => ($tan ? '#c4bd97' : '#d9d9d9')};
  color: #111;
  font-size: ${({ $align }) => ($align === 'left' ? 12 : 11)}px;
  line-height: 14px;
  text-align: ${({ $align }) => $align};
  vertical-align: bottom;
  white-space: pre;
`;

const VerticalBar = styled.div`
  display: flex;
  flex-direction: column;
  align-items: center;
  width: 20px;
  padding: 9px 0 2px;
  background: #f5f5f5;
`;

const VerticalThumb = styled.div`
  width: 8px;
  height: 16px;
  margin: 4px 0 auto;
  border-radius: 4px;
  background: #707070;
`;

const ARROWS = {
  up: 'polygon(50% 0, 100% 100%, 0 100%)',
  down: 'polygon(0 0, 100% 0, 50% 100%)',
  left: 'polygon(0 50%, 100% 0, 100% 100%)',
  right: 'polygon(0 0, 100% 50%, 0 100%)',
};

const Arrow = styled.i`
  flex: none;
  width: 7px;
  height: 7px;
  background: #606060;
  clip-path: ${({ $dir }) => ARROWS[$dir]};
`;

const SheetBar = styled.nav`
  display: flex;
  align-items: center;
  height: 28px;
  background: #f2f2f2;
  border-bottom: 1px solid #fafafa;
`;

const SheetNav = styled.div`
  ${center}
  gap: 20px;
  width: 100px;
  padding-right: 14px;
  color: #909090;
`;

const SheetTab = styled.button`
  width: ${({ $active }) => ($active ? 66 : 74)}px;
  height: ${({ $active }) => ($active ? 25 : 16)}px;
  margin: ${({ $active }) => ($active ? '0 4px' : 0)};
  padding-bottom: ${({ $active }) => ($active ? 4 : 0)}px;
  align-self: ${({ $active }) => ($active ? 'flex-start' : 'center')};
  border-right: ${({ $active }) => ($active ? 0 : '1px solid #d4d4d4')};
  border-radius: ${({ $active }) => ($active ? '0 0 4px 4px' : 0)};
  background: ${({ $active }) => ($active ? '#fff' : 'transparent')};
  box-shadow: ${({ $active }) => ($active ? '0 1px 3px rgba(0, 0, 0, 0.3)' : 'none')};
  color: #333;
  font-size: 12px;
  font-weight: ${({ $active }) => ($active ? 700 : 400)};
  line-height: 16px;

  span {
    border-bottom: 2px solid ${({ $active }) => ($active ? '#107c41' : 'transparent')};
  }
`;

const NewSheet = styled.button`
  margin-left: 38px;
  line-height: 0;
`;

const HorizontalBar = styled.div`
  display: flex;
  align-items: center;
  flex: 1;
  margin: 0 21px 0 139px;

  ${Dots} {
    margin-right: 8px;
  }
`;

const HorizontalTrack = styled.div`
  flex: 1;
  margin: 0 3px 0 4px;
`;

const HorizontalThumb = styled.div`
  width: 96%;
  height: 8px;
  border-radius: 4px;
  background: #707070;
`;

const StatusBar = styled.footer`
  display: flex;
  align-items: center;
  height: 20px;
  padding: 0 7px 0 10px;
  background: #f3f3f3;
`;

const StatusItem = styled.span`
  display: flex;
  align-items: center;
  gap: 2px;
  margin-left: 13px;
`;

const ViewControls = styled.div`
  display: flex;
  align-items: center;
  margin-left: auto;
`;

const ViewButton = styled.button`
  ${center}
  width: 36px;
  height: 20px;
  background: ${({ $active }) => ($active ? '#dcdcdc' : 'transparent')};
`;

const ZoomButton = styled.button`
  ${center}
  width: 16px;

  ${ViewButton} + & {
    margin-left: 3px;
  }
`;

const ZoomSlider = styled.input`
  appearance: none;
  width: 90px;
  height: 12px;
  background: linear-gradient(#6a6a6a, #6a6a6a) center / 100% 1px no-repeat;

  &::-webkit-slider-thumb {
    appearance: none;
    width: 4px;
    height: 11px;
    background: #606060;
  }
`;

const ZoomValue = styled.span`
  width: 32px;
  text-align: right;
`;
